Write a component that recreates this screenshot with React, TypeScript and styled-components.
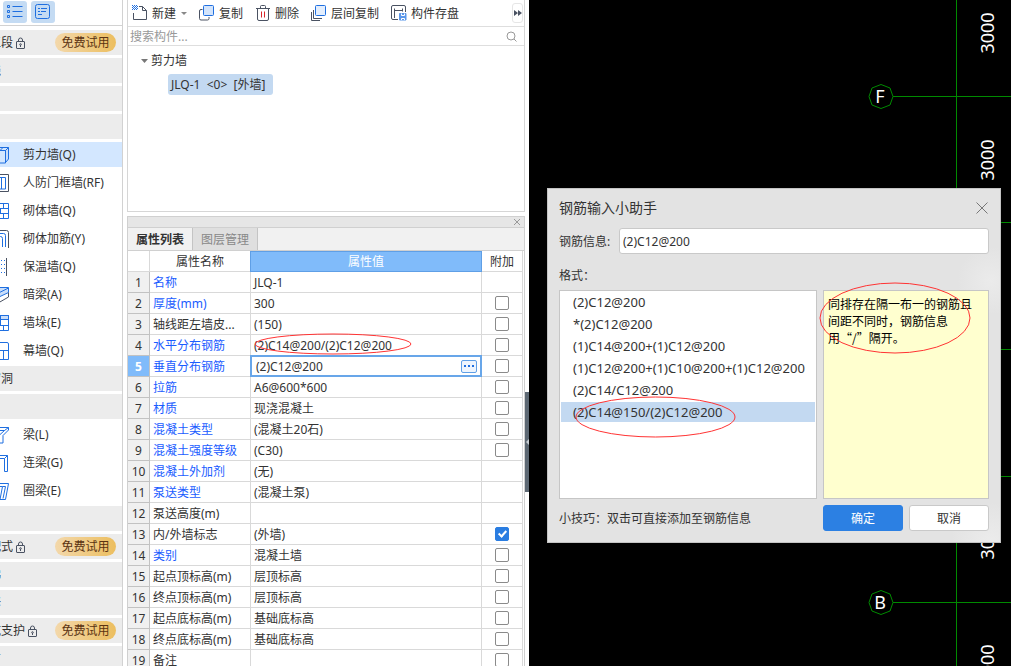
import React, { useState } from "react";
import styled, { createGlobalStyle, css } from "styled-components";

const GlobalStyle = createGlobalStyle`
  *, *::before, *::after { box-sizing: border-box; }
  html, body, #root { height: 100%; }
  body {
    margin: 0;
    overflow: hidden;
    background: #fff;
    color: #333;
    font: 12px/16px "Noto Sans", "Noto Sans CJK SC", sans-serif;
  }
  button, input { font: inherit; color: inherit; }
  button { padding: 0; border: 0; background: none; white-space: nowrap; }
  svg { display: block; flex: none; }
`;

const BLUE = "#1f6fe0";
const INK = "#4a5262";

/* ---------- shell ---------- */

const Shell = styled.div`
  display: flex;
  height: 100vh;
  overflow: hidden;
`;

const Sidebar = styled.nav`
  flex: none;
  width: 123px;
  overflow: hidden;
  border-right: 1px solid #d2d2d2;
`;

const ViewBar = styled.div`
  display: flex;
  gap: 4px;
  height: 26px;
  padding: 1px 3px 0;
  margin-bottom: 4px;
  border-bottom: 1px solid #d2d2d2;
`;

const ViewButton = styled.button`
  display: grid;
  place-items: center;
  width: 24px;
  height: 22px;
  border-radius: 3px;
  background: #c4dbf3;
`;

const NavRows = styled.div`
  display: flex;
  flex-direction: column;
  gap: 3px;
`;

const GroupRow = styled.div`
  display: flex;
  flex: none;
  align-items: center;
  gap: 3px;
  height: 25px;
  padding-right: 6px;
  background: #ececec;
`;

const GroupName = styled.span<{ $end: number }>`
  display: flex;
  justify-content: flex-end;
  flex: none;
  width: ${(p) => p.$end}px;
  overflow: hidden;
  white-space: nowrap;
`;

const Trial = styled.button`
  width: 61px;
  height: 19px;
  margin-left: auto;
  border-radius: 10px;
  background: linear-gradient(90deg, #f3d8ab, #ecbe5f);
  color: #5b3312;
  line-height: 20px;
`;

const NavItem = styled.button<{ $active?: boolean }>`
  display: flex;
  flex: none;
  align-items: center;
  gap: 14px;
  height: 25px;
  text-align: left;
  background: ${(p) => (p.$active ? "#d3e7ff" : "transparent")};

  svg { margin-left: -9px; }
`;

/* ---------- component list ---------- */

const Middle = styled.main`
  position: relative;
  display: flex;
  flex: none;
  flex-direction: column;
  gap: 4px;
  width: 406px;
  padding: 0 4px;
`;

const ListPanel = styled.section`
  flex: none;
  height: 212px;
  border: solid #d6d6d6;
  border-width: 0 1px 1px;
`;

const Toolbar = styled.div`
  display: flex;
  align-items: center;
  gap: 12px;
  height: 27px;
  padding: 0 0 0 4px;
  border-bottom: 1px solid #dedede;
`;

const Tool = styled.button`
  display: flex;
  align-items: center;
  gap: 4px;
`;

const ToolText = styled.span`
  padding-top: 2px;
`;

const Caret = styled.span`
  width: 6px;
  margin-left: 1px;
  border: solid transparent;
  border-width: 3px 3px 0;
  border-top-color: #888;
`;

const More = styled.button`
  display: grid;
  place-items: center;
  width: 11px;
  height: 20px;
  margin: 0 1px 0 auto;
  border: 1px solid #e6e6e6;
  border-radius: 3px;
`;

const SearchRow = styled.label`
  display: flex;
  align-items: center;
  height: 19px;
  padding: 0 7px 0 2px;
  border-bottom: 1px solid #dedede;

  input {
    flex: 1;
    min-width: 0;
    height: 18px;
    padding: 0;
    border: 0;
    outline: 0;
    background: none;
  }
  input::placeholder { color: #999; opacity: 1; }
`;

const Tree = styled.div`
  display: flex;
  flex-direction: column;
  align-items: flex-start;
  padding: 3px 12px;
`;

const TreeParent = styled.button`
  display: flex;
  align-items: center;
  gap: 2px;
  height: 24px;
`;

const TreeLeaf = styled.button`
  min-width: 105px;
  height: 21px;
  margin: 1px 28px;
  padding: 0 3px;
  border-radius: 3px;
  background: #c3d9f1;
  line-height: 20px;
  text-align: left;
  white-space: pre;
`;

/* ---------- property table ---------- */

const PropPanel = styled.section`
  flex: 1;
  min-height: 0;
  overflow: hidden;
  border: solid #d0d0d0;
  border-width: 1px 1px 0;
`;

const PanelHead = styled.div`
  display: flex;
  justify-content: flex-end;
  align-items: center;
  height: 11px;
  padding-right: 3px;
  border-bottom: 1px solid #d0d0d0;
  background: #e6e6e6;
`;

const Tabs = styled.div`
  display: flex;
  height: 23px;
  border-bottom: 1px solid #d0d0d0;
  background: #f1f1f1;
`;

const Tab = styled.button<{ $active?: boolean }>`
  width: 65px;
  padding-top: 1px;
  border-right: 1px solid #c4c4c4;
  line-height: 21px;
  ${(p) =>
    p.$active
      ? css`font-weight: 700; background: #f1f1f1;`
      : css`color: #888; background: #dfdfdf;`}
`;

const Grid = styled.table`
  width: calc(100% - 1px);
  border-spacing: 0;
  table-layout: fixed;

  th, td {
    height: 21px;
    padding: 2px 0 0;
    border: solid #d9d9d9;
    border-width: 0 1px 1px 0;
    font-weight: 400;
    line-height: 16px;
    text-align: left;
    white-space: nowrap;
  }
  thead th { text-align: center; }
`;

const ValueHead = styled.th`
  && {
    border-color: #5f9fe6;
    background: #80bbfa;
    box-shadow: -1px 0 #5f9fe6, inset 0 1px #5f9fe6;
    color: #fff;
  }
`;

const NumCell = styled.th<{ $active?: boolean }>`
  && {
    border-color: #c2c2c2;
    background: ${(p) => (p.$active ? "#80bbfa" : "#f0f0f0")};
    color: ${(p) => (p.$active ? "#fff" : "#333")};
    font-weight: ${(p) => (p.$active ? 700 : 400)};
    text-align: center;
  }
`;

const NameCell = styled.td<{ $link: boolean }>`
  && {
    padding-left: 3px;
    color: ${(p) => (p.$link ? "#1a5cff" : "#333")};
  }
`;

const ValueCell = styled.td<{ $editing: boolean }>`
  && {
    position: relative;
    padding: ${(p) => (p.$editing ? "0" : "2px 0 0 3px")};
  }
`;

const CheckCell = styled.td`
  && { padding: 0; }
  && > input { margin: 0 auto; }
`;

const Check = styled.input`
  position: relative;
  display: block;
  width: 14px;
  height: 14px;
  appearance: none;
  border: 1px solid #8a8a8a;
  border-radius: 2px;
  background: #fff;

  &:checked {
    border-color: #2a7de1;
    background: #2a7de1;
  }
  &:checked::after {
    content: "";
    position: absolute;
    left: 4px;
    top: 1px;
    width: 5px;
    height: 8px;
    border: solid #fff;
    border-width: 0 2px 2px 0;
    transform: rotate(42deg);
  }
`;

const Editor = styled.div`
  display: flex;
  align-items: center;
  height: 22px;
  margin: -1px;
  padding: 0 3px 0 4px;
  border: 2px solid #68a6e9;
  background: #fff;

  input {
    flex: 1;
    min-width: 0;
    height: 18px;
    padding: 0;
    border: 0;
    outline: 0;
    background: none;
  }
`;

const Dots = styled.button`
  display: grid;
  place-items: center;
  width: 16px;
  height: 13px;
  border: 1px solid #5f9fe6;
  border-radius: 2px;
  background: #eef5fe;
`;

const Splitter = styled.button`
  position: absolute;
  top: 392px;
  right: 0;
  display: grid;
  place-items: center;
  width: 4px;
  height: 100px;
  background: #5d6873;
`;

/* ---------- drawing area and dialog ---------- */

const Canvas = styled.section`
  position: relative;
  flex: 1;
  min-width: 0;
  overflow: hidden;
  background: #000;

  > svg { width: 100%; height: 100%; }
`;

const Dialog = styled.div`
  position: absolute;
  left: 18px;
  top: 188px;
  width: 454px;
  padding: 0 11px 11px;
  border: 1px solid #c4c4c4;
  background:
    radial-gradient(circle at 98% 26%, #ebebeb, transparent 34px),
    radial-gradient(circle at 98% 100%, #ececec, transparent 40px),
    #e3e3e3;
`;

const TitleRow = styled.div`
  display: flex;
  align-items: center;
  justify-content: space-between;
  height: 39px;
  padding: 0 1px 2px 0;

  h2 {
    margin: 0;
    font-size: 14px;
    font-weight: 400;
    line-height: 20px;
  }
`;

const Field = styled.label`
  display: flex;
  align-items: center;

  span {
    width: 60px;
    padding-top: 2px;
  }
  input {
    flex: 1;
    min-width: 0;
    height: 26px;
    padding: 0 3px;
    border: 1px solid #c9c9c9;
    border-radius: 3px;
    outline: 0;
    background: #fff;
  }
`;

const FormatLabel = styled.div`
  height: 36px;
  padding-top: 14px;
`;

const Boxes = styled.div`
  display: flex;
  gap: 6px;
  height: 209px;
`;

const FormatList = styled.div`
  position: relative;
  display: flex;
  flex: 1;
  flex-direction: column;
  gap: 2px;
  min-width: 0;
  padding: 1px;
  border: 1px solid #c6c6c6;
  background: #fff;
  font-size: 13px;
`;

const FormatItem = styled.button<{ $active: boolean }>`
  height: 20px;
  padding: 0 12px;
  text-align: left;
  background: ${(p) => (p.$active ? "#c3d9f1" : "transparent")};
`;

const Note = styled.div`
  position: relative;
  flex: none;
  width: 166px;
  padding: 4px;
  border: 1px solid #c6c6c6;
  background: #ffffcf;
  color: #000;
  font-family: "Noto Sans CJK SC", sans-serif;
  line-height: 17px;
  white-space: nowrap;
`;

const Footer = styled.div`
  display: flex;
  align-items: center;
  gap: 6px;
  margin-top: 6px;

  span {
    flex: 1;
    padding-top: 2px;
  }
`;

const Action = styled.button<{ $primary?: boolean }>`
  width: 80px;
  height: 26px;
  padding-top: 1px;
  border: 1px solid ${(p) => (p.$primary ? "#2c80e3" : "#c9c9c9")};
  border-radius: 3px;
  background: ${(p) => (p.$primary ? "#2c80e3" : "#fff")};
  color: ${(p) => (p.$primary ? "#fff" : "#333")};
`;

const Mark = styled.svg<{ $x: number; $y: number }>`
  position: absolute;
  left: ${(p) => p.$x}px;
  top: ${(p) => p.$y}px;
  z-index: 1;
  pointer-events: none;
`;

const RedEllipse = ({ x, y, w, h }: { x: number; y: number; w: number; h: number }) => (
  <Mark $x={x} $y={y} width={w} height={h} aria-hidden>
    <ellipse cx={w / 2} cy={h / 2} rx={w / 2 - 1} ry={h / 2 - 1} fill="none" stroke="#f33" />
  </Mark>
);

/* ---------- icons ---------- */

const Svg = ({ w, h, children }: { w: number; h: number; children: React.ReactNode }) => (
  <svg width={w} height={h} viewBox={`0 0 ${w} ${h}`} fill="none" stroke={BLUE} aria-hidden>
    {children}
  </svg>
);

const LockIcon = () => (
  <Svg w={9} h={12}>
    <g stroke={INK}>
      <rect x=".5" y="4.5" width="8" height="7" rx=".5" />
      <path d="M2.500 4.500V3a2 2 0 0 1 4 0v1.500M4.500 8v2" />
      <circle cx="4.5" cy="7.5" r=".8" />
    </g>
  </Svg>
);

const navIcons: Record<string, React.ReactNode> = {
  shear: (
    <>
      <path d="M14.500 4.500 17.500 1.500V13l-3 3.500z" fill="#c9defa" />
      <path d="M0 4.500h14.500v12.500H0M3 1.500h14.500M9 4.500l3-3" />
    </>
  ),
  frame: (
    <>
      <path d="M0 .5h17.500v17H0" stroke={INK} />
      <path d="M0 3.500h14.500v11.500H0M10.500 3.500V15" />
    </>
  ),
  brick: <path d="M0 1.500h17.500v15H0M0 6.500h17.500M0 11.500h17.500M12.500 1.500v5M9.500 6.500v5M12.500 11.500v5" />,
  rebar: (
    <>
      <path d="M0 .5h15.500q2 0 2 2V18" stroke={INK} />
      <path d="M0 3.500h12.500q2 0 2 2V17M0 6.500h9.500q2 0 2 2V17" />
    </>
  ),
  insulation: (
    <>
      <path d="M15.500 0v18" stroke={INK} />
      <path d="M13.500 2v14M10.500 2v14" strokeDasharray="1 3" />
    </>
  ),
  hidden: (
    <>
      <path d="M0 7 8 1.500h9.500v5L8 11H0z" fill="#c9defa" />
      <path d="M0 7h7.500l10-5M8 11V7" />
      <path d="M17.500 6.500V11L8 16.500H0" stroke={INK} />
    </>
  ),
  pier: (
    <>
      <path d="M9.500 1.500h8v4h-8z" fill="#c9defa" />
      <path d="M0 1.500h17.500v15H0M0 5.500h17.500M0 11.500h17.500M12.500 11.500v5M9.500 5.500v6" />
    </>
  ),
  curtain: <path d="M0 .5h16q1.500 0 1.500 1.500v15.500H0M0 8.500h17.500M12.500 8.500v9" />,
  beam: <path d="M0 1.500h17.500V4L12 9.500V17H8.500V9l5-4.500H0M13.500 4.500l4-3" />,
  link: <path d="M0 1.500h16.500v16h-3v-13H0M13.500 4.500l3-3" />,
  ring: <path d="M0 1.500h17.500l-3 16H9l2.500-13H0M11.500 4.500h3l-2.500 12" />,
};

const NavIcon = ({ kind }: { kind: string }) => (
  <Svg w={18} h={18}>{navIcons[kind]}</Svg>
);

const NewIcon = () => (
  <Svg w={16} h={16}>
    <path d="M7 1.500h3.500l4 4v9h-13V8M10.500 1.500v4h4" stroke={INK} />
    <path d="M0 .5h5M0 2.500h5M0 4.500h5" strokeDasharray="1 1" />
    <path d="M1 1.500h5M1 3.500h5" strokeDasharray="1 1" />
  </Svg>
);

const CopyIcon = () => (
  <Svg w={16} h={16}>
    <path d="M3.500 4.500H2q-1.500 0-1.500 1.500v7.500q0 1.500 1.500 1.500h6.500q1.500 0 1.500-1.500V12" stroke={INK} />
    <rect x="4.5" y=".5" width="10" height="10" rx="1" fill="#d3e4fb" />
  </Svg>
);

const TrashIcon = () => (
  <Svg w={16} h={16}>
    <path d="M1 3.500h14M5.500 3.500v-2q0-1 1-1h3q1 0 1 1v2M2.500 3.500V14q0 1.500 1.500 1.500h8q1.500 0 1.500-1.500V3.500" stroke={INK} />
    <path d="M6.500 6.500v6M9.500 6.500v6" stroke="#d9262c" />
  </Svg>
);

const LayerCopyIcon = () => (
  <Svg w={16} h={16}>
    <path d="M2.500 5v8.500h8.500M.5 7v8.500H9" stroke={INK} />
    <rect x="4.5" y=".5" width="10" height="10" rx="1" fill="#e3eefd" />
  </Svg>
);

const SaveIcon = () => (
  <Svg w={16} h={16}>
    <path d="M7 14.500H2q-1.500 0-1.500-1.500V2Q.5.500 2 .5h11q1.500 0 1.500 1.500v5M3.500 13V3.500M3.500 5.500h8M11.500 3.500v3" stroke={INK} />
    <path d="M8.500 8.500h6.500v6.500H8.500z" fill="#5b97ea" stroke="#5b97ea" />
    <path d="M10.500 8.500v2h3v-2M10.500 15v-1.500h3V15" stroke="#fff" />
  </Svg>
);

/* ---------- data ---------- */

type NavRow =
  | { group: string; end: number; trial?: boolean }
  | { item: string; icon: string };

const navRows: NavRow[] = [
  { group: "施工段", end: 13, trial: true },
  { group: "轴线", end: 1 },
  { group: "", end: 0 },
  { group: "", end: 0 },
  { item: "剪力墙(Q)", icon: "shear" },
  { item: "人防门框墙(RF)", icon: "frame" },
  { item: "砌体墙(Q)", icon: "brick" },
  { item: "砌体加筋(Y)", icon: "rebar" },
  { item: "保温墙(Q)", icon: "insulation" },
  { item: "暗梁(A)", icon: "hidden" },
  { item: "墙垛(E)", icon: "pier" },
  { item: "幕墙(Q)", icon: "curtain" },
  { group: "门窗洞", end: 13 },
  { group: "", end: 0 },
  { item: "梁(L)", icon: "beam" },
  { item: "连梁(G)", icon: "link" },
  { item: "圈梁(E)", icon: "ring" },
  { group: "", end: 0 },
  { group: "装配式", end: 13, trial: true },
  { group: "楼梯", end: 1 },
  { group: "装修", end: 1 },
  { group: "基坑支护", end: 25, trial: true },
  { group: "土方", end: 1 },
];

type Prop = { name: string; value: string; link?: boolean; check?: boolean };

const props: Prop[] = [
  { name: "名称", value: "JLQ-1", link: true },
  { name: "厚度(mm)", value: "300", link: true, check: false },
  { name: "轴线距左墙皮...", value: "(150)", check: false },
  { name: "水平分布钢筋", value: "(2)C14@200/(2)C12@200", link: true, check: false },
  { name: "垂直分布钢筋", value: "(2)C12@200", link: true, check: false },
  { name: "拉筋", value: "A6@600*600", link: true, check: false },
  { name: "材质", value: "现浇混凝土", link: true, check: false },
  { name: "混凝土类型", value: "(混凝土20石)", link: true, check: false },
  { name: "混凝土强度等级", value: "(C30)", link: true, check: false },
  { name: "混凝土外加剂", value: "(无)", link: true },
  { name: "泵送类型", value: "(混凝土泵)", link: true },
  { name: "泵送高度(m)", value: "" },
  { name: "内/外墙标志", value: "(外墙)", check: true },
  { name: "类别", value: "混凝土墙", link: true, check: false },
  { name: "起点顶标高(m)", value: "层顶标高", check: false },
  { name: "终点顶标高(m)", value: "层顶标高", check: false },
  { name: "起点底标高(m)", value: "基础底标高", check: false },
  { name: "终点底标高(m)", value: "基础底标高", check: false },
  { name: "备注", value: "", check: false },
];

const formats = [
  "(2)C12@200",
  "*(2)C12@200",
  "(1)C14@200+(1)C12@200",
  "(1)C12@200+(1)C10@200+(1)C12@200",
  "(2)C14/C12@200",
  "(2)C14@150/(2)C12@200",
];

const axisRows = [96, 222, 349, 476, 602];
const spans = [33, 160, 286, 413, 539, 665];

/* ---------- drawing ---------- */

const AxisBubble = ({ y, name }: { y: number; name: string }) => (
  <g transform={`translate(352 ${y})`}>
    <path d="M12 .5 9-8 0-11.500-9-8-12 .5-9 9 0 12.500 9 9Z" fill="#000" stroke="#008a00" />
    <text x="-1" y="7" fill="#fff" fontSize="18" textAnchor="middle">{name}</text>
  </g>
);

const AxisDrawing = () => (
  <svg aria-label="轴网">
    <path d="M427.500 0V2000" stroke="#008a00" />
    {axisRows.map((y) => (
      <path key={y} d={`M364 ${y + 0.5}H3000`} stroke="#008a00" />
    ))}
    {spans.map((y) => (
      <text key={y} transform={`translate(465 ${y}) rotate(-90)`} fill="#fff" fontSize="18" textAnchor="middle">
        3000
      </text>
    ))}
    <AxisBubble y={96} name="F" />
    <AxisBubble y={602} name="B" />
  </svg>
);

export default function App() {
  const [info, setInfo] = useState("(2)C12@200");
  const [format, setFormat] = useState(5);

  return (
    <Shell>
      <GlobalStyle />
      <Sidebar>
        <ViewBar>
          <ViewButton aria-label="列表">
            <Svg w={16} h={16}>
              <path d="M5.500 2.500h10M5.500 7.500h10M5.500 12.500h10" />
              <path d="M.5 1.500h2v2h-2zM.5 6.500h2v2h-2zM.5 11.500h2v2h-2z" />
            </Svg>
          </ViewButton>
          <ViewButton aria-label="详情">
            <Svg w={16} h={16}>
              <rect x=".5" y=".5" width="14" height="14" rx="2" />
              <path d="M3 4.500h2M6 4.500h6M3 7.500h2M6 7.500h5M3 10.500h4" />
            </Svg>
          </ViewButton>
        </ViewBar>
        <NavRows>
          {navRows.map((row, i) =>
            "group" in row ? (
              <GroupRow key={i}>
                <GroupName $end={row.end}>{row.group}</GroupName>
                {row.trial && <LockIcon />}
                {row.trial && <Trial>免费试用</Trial>}
              </GroupRow>
            ) : (
              <NavItem key={i} $active={row.icon === "shear"}>
                <NavIcon kind={row.icon} />
                {row.item}
              </NavItem>
            ),
          )}
        </NavRows>
      </Sidebar>

      <Middle>
        <ListPanel>
          <Toolbar>
            <Tool><NewIcon /><ToolText>新建</ToolText><Caret /></Tool>
            <Tool><CopyIcon /><ToolText>复制</ToolText></Tool>
            <Tool><TrashIcon /><ToolText>删除</ToolText></Tool>
            <Tool><LayerCopyIcon /><ToolText>层间复制</ToolText></Tool>
            <Tool><SaveIcon /><ToolText>构件存盘</ToolText></Tool>
            <More aria-label="更多">
              <Svg w={8} h={6}>
                <path d="M0 0 4 3 0 6zM4 0 8 3 4 6z" fill={INK} stroke="none" />
              </Svg>
            </More>
          </Toolbar>
          <SearchRow>
            <input placeholder="搜索构件..." aria-label="搜索构件" />
            <Svg w={11} h={11}>
              <g stroke="#999">
                <circle cx="5" cy="5" r="4" />
                <path d="m8 8 2.500 2.500" />
              </g>
            </Svg>
          </SearchRow>
          <Tree>
            <TreeParent>
              <Svg w={9} h={5}>
                <path d="M1 0h7L4.500 4z" fill="#777" stroke="none" />
              </Svg>
              剪力墙
            </TreeParent>
            <TreeLeaf>{"JLQ-1  <0>  [外墙]"}</TreeLeaf>
          </Tree>
        </ListPanel>

        <PropPanel>
          <PanelHead>
            <button aria-label="关闭属性">
              <Svg w={8} h={8}>
                <path d="m1 1 6 6M7 1 1 7" stroke="#999" />
              </Svg>
            </button>
          </PanelHead>
          <Tabs>
            <Tab $active>属性列表</Tab>
            <Tab>图层管理</Tab>
          </Tabs>
          <Grid>
            <colgroup>
              <col style={{ width: 22 }} />
              <col style={{ width: 101 }} />
              <col />
              <col style={{ width: 41 }} />
            </colgroup>
            <thead>
              <tr>
                <th />
                <th>属性名称</th>
                <ValueHead>属性值</ValueHead>
                <th>附加</th>
              </tr>
            </thead>
            <tbody>
              {props.map((p, i) => (
                <tr key={p.name}>
                  <NumCell $active={i === 4}>{i + 1}</NumCell>
                  <NameCell $link={!!p.link}>{p.name}</NameCell>
                  <ValueCell $editing={i === 4}>
                    {i === 4 ? (
                      <Editor>
                        <input value={info} onChange={(e) => setInfo(e.target.value)} aria-label={p.name} />
                        <Dots aria-label="编辑">
                          <Svg w={10} h={2}>
                            <path d="M0 1h2M4 1h2M8 1h2" strokeWidth="2" />
                          </Svg>
                        </Dots>
                      </Editor>
                    ) : (
                      p.value
                    )}
                    {i === 3 && <RedEllipse x={3} y={-2} w={158} h={22} />}
                  </ValueCell>
                  <CheckCell>
                    {p.check !== undefined && (
                      <Check type="checkbox" defaultChecked={p.check} aria-label={`附加 ${p.name}`} />
                    )}
                  </CheckCell>
                </tr>
              ))}
            </tbody>
          </Grid>
        </PropPanel>
        <Splitter aria-label="收起">
          <Svg w={4} h={6}>
            <path d="M4 0 1 3l3 3z" fill="#c8ced4" stroke="none" />
          </Svg>
        </Splitter>
      </Middle>

      <Canvas>
        <AxisDrawing />
        <Dialog role="dialog" aria-labelledby="helper-title">
          <TitleRow>
            <h2 id="helper-title">钢筋输入小助手</h2>
            <button aria-label="关闭">
              <Svg w={12} h={12}>
                <path d="m.5.5 11 11M11.500.5l-11 11" stroke="#777" />
              </Svg>
            </button>
          </TitleRow>
          <Field>
            <span>钢筋信息:</span>
            <input value={info} onChange={(e) => setInfo(e.target.value)} />
          </Field>
          <FormatLabel>格式：</FormatLabel>
          <Boxes>
            <FormatList role="listbox" aria-label="格式">
              {formats.map((f, i) => (
                <FormatItem
                  key={f}
                  role="option"
                  aria-selected={i === format}
                  $active={i === format}
                  onClick={() => setFormat(i)}
                  onDoubleClick={() => setInfo(f)}
                >
                  {f}
                </FormatItem>
              ))}
              <RedEllipse x={15} y={105} w={161} h={42} />
            </FormatList>
            <Note>
              同排存在隔一布一的钢筋且
              <br />
              间距不同时，钢筋信息
              <br />
              用“/”隔开。
              <RedEllipse x={-5} y={-9} w={152} h={72} />
            </Note>
          </Boxes>
          <Footer>
            <span>小技巧：双击可直接添加至钢筋信息</span>
            <Action $primary>确定</Action>
            <Action>取消</Action>
          </Footer>
        </Dialog>
      </Canvas>
    </Shell>
  );
}
